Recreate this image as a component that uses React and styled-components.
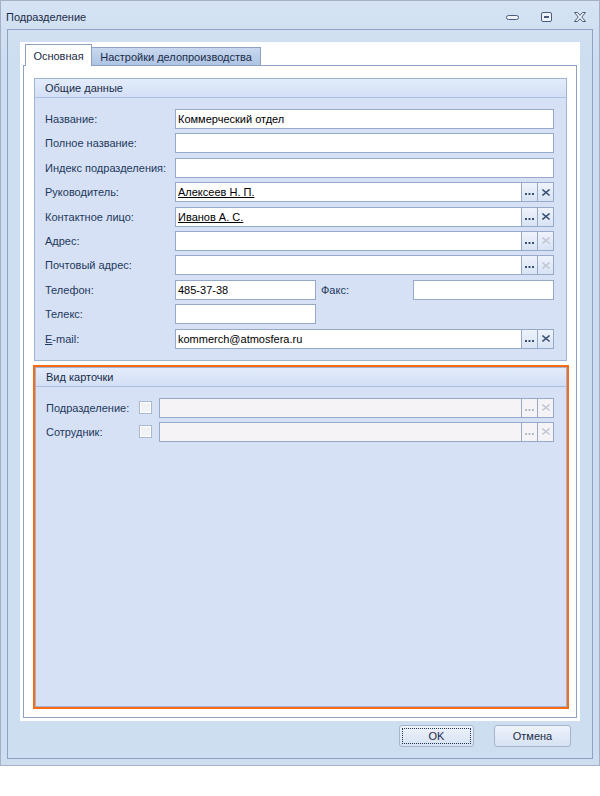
import React from "react";
import styled, { createGlobalStyle } from "styled-components";

const GlobalStyle = createGlobalStyle`
  html, body {
    margin: 0;
    padding: 0;
    background: #ffffff;
  }
  body {
    font-family: "Liberation Sans", Arial, sans-serif;
    font-size: 11px;
    color: #1e395b;
  }
`;

const Window = styled.div`
  width: 600px;
  height: 766px;
  box-sizing: border-box;
  border: 1px solid #a3b0c6;
  background: linear-gradient(#d5e3f4, #cddef0 60px, #cddef0);
  display: flex;
  flex-direction: column;
`;

const TitleBar = styled.div`
  height: 28px;
  box-sizing: border-box;
  padding: 4px 10px 0 5px;
  display: flex;
  align-items: center;
  color: #1b2c48;
  font-size: 11px;
`;

const Title = styled.div`
  flex: 1;
`;

const TitleButtons = styled.div`
  display: flex;
  align-items: center;
  gap: 22px;
  margin-right: 3px;
`;

const Frame = styled.div`
  flex: 1;
  margin: 0 6px 6px;
  border: 1px solid #8ea3c3;
  padding: 12px 12px 0;
  display: flex;
  flex-direction: column;
`;

const Sheet = styled.div`
  flex: 1;
  background: #ffffff;
  padding: 2px 3px 3px;
  display: flex;
  flex-direction: column;
`;

const TabStrip = styled.div`
  display: flex;
  align-items: flex-end;
  padding-left: 2px;
  height: 21px;
  position: relative;
  z-index: 1;
`;

const Tab = styled.div`
  box-sizing: border-box;
  border: 1px solid #8ea3c3;
  border-bottom: none;
  display: flex;
  align-items: center;
  justify-content: center;
  width: ${(p) => p.$width}px;
  height: ${(p) => (p.$active ? 22 : 18)}px;
  margin-bottom: ${(p) => (p.$active ? -1 : 0)}px;
  margin-left: ${(p) => (p.$active ? 0 : -1)}px;
  background: ${(p) =>
    p.$active ? "#ffffff" : "linear-gradient(#c9d9ef, #aec4e4)"};
  color: #1b2c48;
  padding-top: ${(p) => (p.$active ? 1 : 0)}px;
`;

const TabPage = styled.div`
  flex: 1;
  border: 1px solid #8ea3c3;
  padding: 12px 9px 8px 10px;
  display: flex;
  flex-direction: column;
  gap: 4px;
`;

const Group = styled.div`
  border: 1px solid #9fb3d3;
  background: #d6e1f6;
  display: flex;
  flex-direction: column;
  flex: ${(p) => (p.$grow ? 1 : "none")};
`;

const Highlight = styled.div`
  flex: 1;
  display: flex;
  flex-direction: column;
  border: 2px solid #f96a12;
  margin: 0 -2px 0 -1px;
`;

const GroupHeader = styled.div`
  height: 19px;
  box-sizing: border-box;
  border-bottom: 1px solid #aabfe1;
  background: linear-gradient(#e3ecfc, #d3dff6);
  padding-left: 10px;
  display: flex;
  align-items: center;
  color: #1b2c48;
`;

const GroupBody = styled.div`
  padding: 11px 12px 11px ${(p) => p.$left || 10}px;
  display: flex;
  flex-direction: column;
  gap: ${(p) => p.$gap || 4.4}px;
`;

const Row = styled.div`
  display: grid;
  grid-template-columns: ${(p) => p.$cols || "130px 1fr"};
  align-items: center;
  height: 20px;
`;

const Label = styled.div`
  color: #1e395b;
  white-space: nowrap;
  padding-left: ${(p) => p.$indent || 0}px;
`;

const Accel = styled.span`
  text-decoration: underline;
`;

const Field = styled.div`
  box-sizing: border-box;
  height: 20px;
  border: 1px solid #97a9c8;
  background: ${(p) => (p.$disabled ? "#f6f3f7" : "#ffffff")};
  display: flex;
  align-items: stretch;
  color: #000000;
`;

const FieldText = styled.div`
  flex: 1;
  padding-left: 2px;
  display: flex;
  align-items: center;
  white-space: nowrap;
  overflow: hidden;
  text-decoration: ${(p) => (p.$link ? "underline" : "none")};
`;

const SideButton = styled.div`
  width: 16px;
  box-sizing: border-box;
  border-left: 1px solid #97a9c8;
  background: ${(p) =>
    p.$disabled ? "#f6f3f7" : "linear-gradient(#eef3fb, #d8e3f4)"};
  display: flex;
  align-items: center;
  justify-content: center;
  padding-top: ${(p) => p.$pad || 0}px;
`;

const CheckBox = styled.div`
  width: 13px;
  height: 13px;
  box-sizing: border-box;
  border: 1px solid #a9b7cf;
  background: #f1f2f6;
  box-shadow: inset 0 0 0 1px #ffffff;
`;

const ButtonBar = styled.div`
  height: 37px;
  box-sizing: border-box;
  padding: 4px 9px 0 0;
  display: flex;
  justify-content: flex-end;
  align-items: flex-start;
  gap: 20px;
`;

const DialogButton = styled.div`
  width: ${(p) => p.$width}px;
  height: 22px;
  box-sizing: border-box;
  border: 1px solid #a6b5cd;
  border-radius: 3px;
  background: linear-gradient(#eef3fb, #d6e2f2);
  display: flex;
  align-items: center;
  justify-content: center;
  color: #1b2c48;
  position: relative;
  &::after {
    content: "";
    display: ${(p) => (p.$focused ? "block" : "none")};
    position: absolute;
    inset: 2px;
    border: 1px dotted #22334f;
  }
`;

const Dots = ({ disabled }) => (
  <svg width="9" height="2" viewBox="0 0 9 2">
    {[0, 3.5, 7].map((x) => (
      <rect key={x} x={x} y="0" width="2" height="2" fill={disabled ? "#b4bccb" : "#3b5275"} />
    ))}
  </svg>
);

const Cross = ({ disabled }) => (
  <svg width="8" height="7" viewBox="0 0 8 7">
    <path
      d="M1 1 L7 6 M7 1 L1 6"
      stroke={disabled ? "#c2c9d5" : "#3b5275"}
      strokeWidth="1.6"
      strokeLinecap="square"
      fill="none"
    />
  </svg>
);

const MinimizeIcon = () => (
  <svg width="13" height="7" viewBox="0 0 13 7">
    <rect x="0.5" y="1.5" width="12" height="4" rx="2" fill="#eef3fb" stroke="#4b5b7b" />
  </svg>
);

const RestoreIcon = () => (
  <svg width="11" height="10" viewBox="0 0 11 10">
    <rect x="0.5" y="0.5" width="10" height="9" rx="1.5" fill="#eef3fb" stroke="#4b5b7b" />
    <rect x="3" y="4" width="5" height="2" fill="#4b5b7b" />
  </svg>
);

const CloseIcon = () => (
  <svg width="12" height="10" viewBox="0 0 12 10">
    <path
      d="M0.5 0.5 H3.5 L6 3.3 L8.5 0.5 H11.5 L7.8 5 L11.5 9.5 H8.5 L6 6.7 L3.5 9.5 H0.5 L4.2 5 Z"
      fill="#eef3fb"
      stroke="#4b5b7b"
      strokeLinejoin="round"
    />
  </svg>
);

const Lookup = ({ value, link, clearOff, disabled }) => (
  <Field $disabled={disabled}>
    <FieldText $link={link}>{value}</FieldText>
    <SideButton $disabled={disabled} $pad={4}>
      <Dots disabled={disabled} />
    </SideButton>
    <SideButton $disabled={disabled}>
      <Cross disabled={disabled || clearOff} />
    </SideButton>
  </Field>
);

const TextField = ({ value }) => (
  <Field>
    <FieldText>{value}</FieldText>
  </Field>
);

export default function App() {
  return (
    <>
      <GlobalStyle />
      <Window>
        <TitleBar>
          <Title>Подразделение</Title>
          <TitleButtons>
            <MinimizeIcon />
            <RestoreIcon />
            <CloseIcon />
          </TitleButtons>
        </TitleBar>
        <Frame>
          <Sheet>
            <TabStrip>
              <Tab $active $width={67}>Основная</Tab>
              <Tab $width={170}>Настройки делопроизводства</Tab>
            </TabStrip>
            <TabPage>
              <Group>
                <GroupHeader>Общие данные</GroupHeader>
                <GroupBody>
                  <Row>
                    <Label>Название:</Label>
                    <TextField value="Коммерческий отдел" />
                  </Row>
                  <Row>
                    <Label>Полное название:</Label>
                    <TextField />
                  </Row>
                  <Row>
                    <Label>Индекс подразделения:</Label>
                    <TextField />
                  </Row>
                  <Row>
                    <Label>Руководитель:</Label>
                    <Lookup value="Алексеев Н. П." link />
                  </Row>
                  <Row>
                    <Label>Контактное лицо:</Label>
                    <Lookup value="Иванов А. С." link />
                  </Row>
                  <Row>
                    <Label>Адрес:</Label>
                    <Lookup clearOff />
                  </Row>
                  <Row>
                    <Label>Почтовый адрес:</Label>
                    <Lookup clearOff />
                  </Row>
                  <Row $cols="130px 141px 97px 1fr">
                    <Label>Телефон:</Label>
                    <TextField value="485-37-38" />
                    <Label $indent={5}>Факс:</Label>
                    <TextField />
                  </Row>
                  <Row $cols="130px 141px">
                    <Label>Телекс:</Label>
                    <TextField />
                  </Row>
                  <Row>
                    <Label>
                      <Accel>E</Accel>-mail:
                    </Label>
                    <Lookup value="kommerch@atmosfera.ru" />
                  </Row>
                </GroupBody>
              </Group>
              <Highlight>
                <Group $grow>
                  <GroupHeader>Вид карточки</GroupHeader>
                  <GroupBody $left={10} $gap={4}>
                    <Row $cols="93px 20px 1fr">
                      <Label>Подразделение:</Label>
                      <CheckBox />
                      <Lookup disabled />
                    </Row>
                    <Row $cols="93px 20px 1fr">
                      <Label>Сотрудник:</Label>
                      <CheckBox />
                      <Lookup disabled />
                    </Row>
                  </GroupBody>
                </Group>
              </Highlight>
            </TabPage>
          </Sheet>
          <ButtonBar>
            <DialogButton $width={75} $focused>
              OK
            </DialogButton>
            <DialogButton $width={77}>Отмена</DialogButton>
          </ButtonBar>
        </Frame>
      </Window>
    </>
  );
}
